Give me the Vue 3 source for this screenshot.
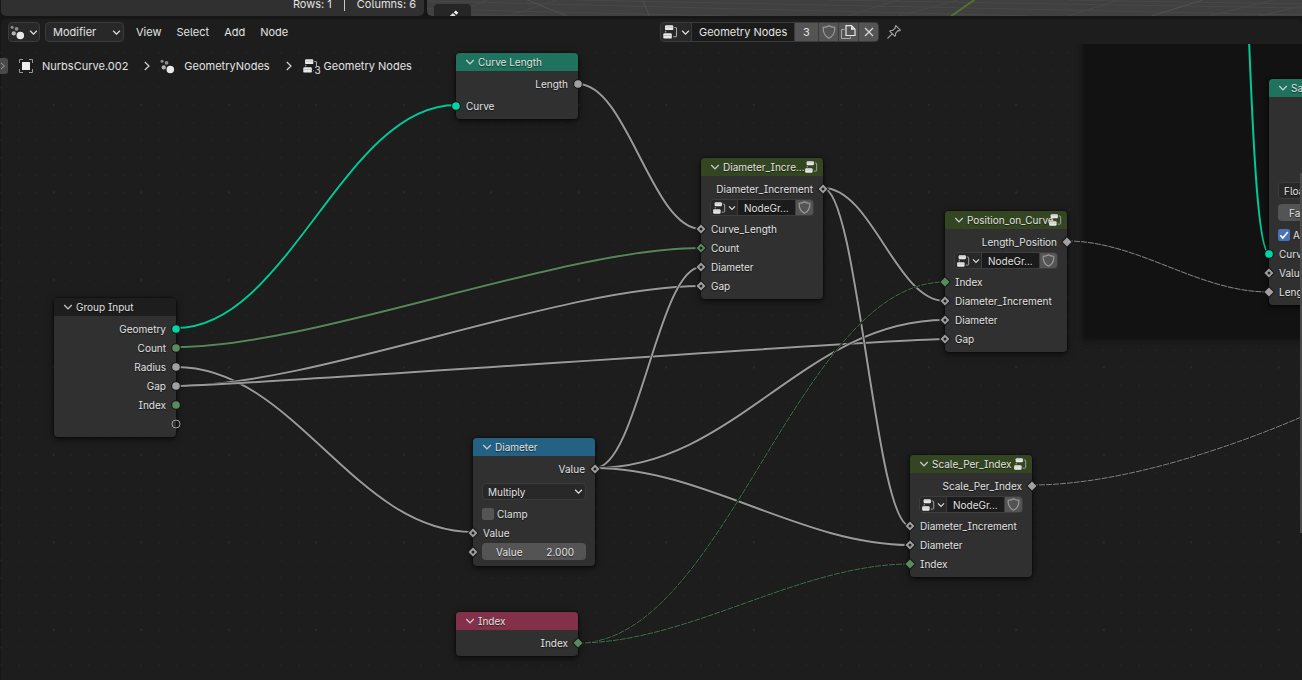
<script setup>
const P = (a, b, c, d) => {
  const w = Math.abs(c - a)
  const slope = Math.abs(d - b) / w
  const dx = 0.4 * w * Math.min(1, slope * 3.5)
  return `M${a} ${b}C${a + dx} ${b} ${c - dx} ${d} ${c} ${d}`
}
const wires = [
  { d: P(176, 328, 456, 105), kind: 'geo' },
  { d: P(176, 347, 701, 248), kind: 'int' },
  { d: P(176, 367, 473, 532), kind: 'flt' },
  { d: P(176, 386, 701, 286), kind: 'flt' },
  { d: P(176, 386, 945, 339), kind: 'flt' },
  { d: P(578, 84, 701, 229), kind: 'flt' },
  { d: P(595, 468, 701, 267), kind: 'flt' },
  { d: P(595, 468, 945, 320), kind: 'flt' },
  { d: P(595, 468, 910, 545), kind: 'flt' },
  { d: P(823, 188, 945, 301), kind: 'flt' },
  { d: P(823, 188, 910, 526), kind: 'flt' },
  { d: P(578, 643, 945, 282), kind: 'int', thin: true },
  { d: P(578, 643, 910, 564), kind: 'int', thin: true },
  { d: P(1067, 241, 1269, 292), kind: 'flt', thin: true },
  { d: 'M1032 485C1120 485 1230 448 1306 415', kind: 'flt', thin: true },
  { d: 'M1249 40C1252 110 1257 253 1269 253', kind: 'geo' },
]
const out = (text, kind = 'flt', shape = 'circle') => ({ t: 'row', side: 'out', text, kind, shape })
const inp = (text, kind = 'flt', shape = 'hollow') => ({ t: 'row', side: 'in', text, kind, shape })
const group = { t: 'group' }
const nodes = [
  { id: 'gi', title: 'Group Input', x: 54, y: 298, tone: 'dark', rows: [
    out('Geometry', 'geo'), out('Count', 'int'), out('Radius'), out('Gap'), out('Index', 'int'), out('', 'none', 'ring')] },
  { id: 'cl', title: 'Curve Length', x: 456, y: 53, tone: 'teal', rows: [out('Length'), { t: 'gap' }, inp('Curve', 'geo', 'circle')] },
  { id: 'di', title: 'Diameter_Incre...', x: 701, y: 158, tone: 'olive', rows: [
    out('Diameter_Increment', 'flt', 'hollow'), group, inp('Curve_Length'), inp('Count', 'int'), inp('Diameter'), inp('Gap')] },
  { id: 'po', title: 'Position_on_Curve', x: 945, y: 211, tone: 'olive', rows: [
    out('Length_Position', 'flt', 'diamond'), group, inp('Index', 'int', 'diamond'), inp('Diameter_Increment'), inp('Diameter'), inp('Gap')] },
  { id: 'sc', title: 'Scale_Per_Index', x: 910, y: 455, tone: 'olive', rows: [
    out('Scale_Per_Index', 'flt', 'diamond'), group, inp('Diameter_Increment'), inp('Diameter'), inp('Index', 'int', 'diamond')] },
  { id: 'dm', title: 'Diameter', x: 473, y: 438, tone: 'blue', rows: [
    out('Value', 'flt', 'hollow'), { t: 'select', text: 'Multiply', label: 'Operation' }, { t: 'check', text: 'Clamp', on: false },
    inp('Value'), { t: 'number', text: 'Value', value: '2.000' }] },
  { id: 'ix', title: 'Index', x: 456, y: 612, tone: 'red', rows: [out('Index', 'int', 'diamond')] },
  { id: 'sa', title: 'Sample Curve', x: 1269, y: 79, tone: 'teal', rows: [
    { t: 'space' }, { t: 'select', text: 'Float', label: 'Data type' }, { t: 'tab', text: 'Factor' }, { t: 'check', text: 'All Curves', on: true },
    inp('Curve', 'geo', 'circle'), inp('Value'), inp('Length', 'flt', 'diamond')] },
]
</script>

<template>
  <div class="app">
    <svg class="defs" aria-hidden="true">
      <symbol id="i-tree" viewBox="0 0 16 16">
        <rect x="3" y="1.300" width="8.300" height="4.800" rx="1.200" fill="#e8e8e8" />
        <rect x="1.300" y="9.300" width="8.500" height="5.300" rx="1.200" fill="#e8e8e8" />
        <path d="M3.500 3.200h7.300M1.800 11.500h7.500" stroke="#b5b5b5" stroke-width=".700" />
        <path d="M3.700 6.800v1.700M12.300 3.500h1.200q1 0 1 1v7.200q0 1-1 1h-2.300" fill="none" stroke="#a6a6a6" stroke-width="1.100" />
      </symbol>
      <symbol id="i-geo" viewBox="0 0 16 16">
        <circle cx="11" cy="11.300" r="4" fill="#e8e8e8" />
        <circle cx="4" cy="9" r="2.300" fill="#b4b4b4" />
        <circle cx="7" cy="4" r="2" fill="#8e8e8e" />
        <circle cx="2.200" cy="2.500" r="1.600" fill="#8e8e8e" />
      </symbol>
      <symbol id="i-chev" viewBox="0 0 8 8"><path d="M1 2.400 4 5.500 7 2.400" fill="none" stroke="currentColor" stroke-width="1.100" /></symbol>
      <symbol id="i-shield" viewBox="0 0 14 14"><path d="M7 .8C5.500 2 3.500 2.400 1.200 2.400c-.2 4.600 1.400 8.600 5.800 10.800 4.400-2.200 6-6.200 5.800-10.800C10.500 2.400 8.500 2 7 .8z" fill="none" stroke="#9b9b9b" stroke-width="1.200" /></symbol>
    </svg>

    <div class="upper">
      <div class="sheet"><span>Rows: 1</span><i></i><span>Columns: 6</span></div>
      <div class="viewport">
        <svg class="floor" viewBox="0 0 873 16" preserveAspectRatio="none" aria-hidden="true">
          <g stroke="#484848" fill="none">
            <path d="M0 9 300 16M0 1 600 16M150 0 873 15M400 0 873 8M0 14 120 16M640 0 873 4" />
            <path d="M20 16 60 0M80 16 130 0M420 16 470 0M470 16 530 0M640 16 690 0M780 16 845 0M830 16 873 6" />
            <path d="M100 0 140 16M215 0 222 16M723 16 774 0" stroke="#505050" />
          </g>
          <path d="M523 16 546 0" stroke="#54702f" stroke-width="2" />
        </svg>
        <button class="tool" aria-label="Annotate">
          <svg width="16" height="10" viewBox="0 0 16 10"><path d="M2 9.500 8 4l2.500 2.500L7 10H2z" fill="#e0e0e0" /><path d="m8.800 3.300 2-1.800 2.500 2.300-2 1.900z" fill="#f2f2f2" /></svg>
        </button>
      </div>
    </div>

    <section class="editor">
      <header class="bar">
        <button class="type" aria-label="Editor type"><svg width="15" height="15"><use href="#i-geo" /></svg><svg width="9" height="9"><use href="#i-chev" /></svg></button>
        <label class="drop mode"><select aria-label="Node tree type"><option>Modifier</option></select><svg width="9" height="9"><use href="#i-chev" /></svg></label>
        <nav><button>View</button><button>Select</button><button>Add</button><button>Node</button></nav>
        <div class="datablock">
          <button class="pick" aria-label="Browse node tree"><svg width="16" height="16"><use href="#i-tree" /></svg><svg width="9" height="9"><use href="#i-chev" /></svg></button>
          <input class="name" value="Geometry Nodes" aria-label="Node tree name" />
          <button class="users">3</button>
          <button class="sq" aria-label="Fake user"><svg width="14" height="14"><use href="#i-shield" /></svg></button>
          <button class="sq" aria-label="Duplicate">
            <svg width="15" height="15" viewBox="0 0 15 15" fill="none"><path d="M3.500 4.500h-3v9h9v-2" stroke="#a8a8a8" /><path d="M5 .7h5.500L14 4.200v6.300H5z" stroke="#e6e6e6" stroke-width="1.200" /><path d="M10 .7v4h4z" fill="#e6e6e6" /></svg>
          </button>
          <button class="sq" aria-label="Unlink"><svg width="10" height="10" viewBox="0 0 10 10"><path d="m1 1 8 8M9 1 1 9" stroke="#d8d8d8" stroke-width="1.200" /></svg></button>
        </div>
        <button class="pin" aria-label="Pin">
          <svg width="14" height="14" viewBox="0 0 14 14" fill="none" stroke="#a0a0a0" stroke-width="1.100"><path d="M8.800.7 13.300 5.200 12 5.900 11 5.700 8.600 8.300 8.500 10.500 7.800 11.200 2.800 6.200 3.500 5.500 5.700 5.400 8.300 3 8.100 2zM5.300 8.700.5 13.500" /></svg>
        </button>
      </header>

      <div class="canvas">
        <div class="frame"></div>
        <svg class="wires" aria-hidden="true">
          <g v-for="(w, i) in wires" :key="i" :class="['wire', w.kind, { thin: w.thin }]">
            <path class="edge" :d="w.d" /><path class="core" :d="w.d" />
          </g>
        </svg>

        <article v-for="n in nodes" :key="n.id" class="node" :class="n.tone" :style="{ left: n.x + 'px', top: n.y + 'px' }">
          <h2><svg class="fold" width="10" height="10"><use href="#i-chev" /></svg><span>{{ n.title }}</span><svg v-if="n.tone === 'olive'" class="gicon" width="14" height="14"><use href="#i-tree" /></svg></h2>
          <div class="body">
            <template v-for="(r, i) in n.rows" :key="i">
              <div v-if="r.t === 'row'" class="row" :class="r.side">
                <span>{{ r.text }}</span>
                <svg class="sock" :class="r.kind" width="12" height="12" viewBox="-6 -6 12 12">
                  <circle v-if="r.shape === 'circle'" r="3.800" /><circle v-else-if="r.shape === 'ring'" class="ring" r="4" />
                  <path v-else d="M0-4.500 4.500 0 0 4.500-4.500 0z" /><circle v-if="r.shape === 'hollow'" class="hole" r="1.500" />
                </svg>
              </div>
              <div v-else-if="r.t === 'gap'" class="gap"></div>
              <div v-else-if="r.t === 'space'" class="space"></div>
              <div v-else-if="r.t === 'group'" class="group">
                <button class="gpick" aria-label="Browse group"><svg width="14" height="14"><use href="#i-tree" /></svg><svg width="8" height="8"><use href="#i-chev" /></svg></button>
                <input value="NodeGr..." aria-label="Group name" />
                <button class="gshield" aria-label="Fake user"><svg width="13" height="13"><use href="#i-shield" /></svg></button>
              </div>
              <label v-else-if="r.t === 'select'" class="drop small"><select :aria-label="r.label"><option>{{ r.text }}</option></select><svg width="9" height="9"><use href="#i-chev" /></svg></label>
              <button v-else-if="r.t === 'tab'" class="tab">{{ r.text }}</button>
              <label v-else-if="r.t === 'check'" class="check">
                <input type="checkbox" :checked="r.on" />
                <svg v-if="r.on" class="tick" width="12" height="12" viewBox="0 0 12 12"><path d="M2.300 6.300 4.800 9 9.800 3" fill="none" stroke="#fff" stroke-width="1.600" /></svg>
                <span>{{ r.text }}</span>
              </label>
              <div v-else class="row in last">
                <label class="number"><span>{{ r.text }}</span><input :value="r.value" /></label>
                <svg class="sock" width="12" height="12" viewBox="-6 -6 12 12"><path d="M0-4.500 4.500 0 0 4.500-4.500 0z" /><circle class="hole" r="1.500" /></svg>
              </div>
            </template>
          </div>
        </article>

        <div class="crumbs">
          <button class="expand" aria-label="Show toolbar">
            <svg width="6" height="8" viewBox="0 0 6 8"><path d="M1 1 4.500 4 1 7" fill="none" stroke="#a0a0a0" /></svg>
          </button>
          <svg class="obj" width="14" height="14" viewBox="0 0 14 14"><path d="M.5 4V.5H4M10 .5h3.500V4M13.500 10v3.500H10M4 13.500H.5V10" fill="none" stroke="#999" /><rect x="3" y="3" width="8" height="8" rx=".5" fill="#eee" /></svg>
          <a href="#">NurbsCurve.002</a>
          <svg class="sep" width="6" height="10" viewBox="0 0 6 10"><path d="m.8 1 4.200 4L.8 9" fill="none" stroke="#d4d4d4" stroke-width="1.200" /></svg>
          <svg width="15" height="15"><use href="#i-geo" /></svg>
          <a href="#">GeometryNodes</a>
          <svg class="sep" width="6" height="10" viewBox="0 0 6 10"><path d="m.8 1 4.200 4L.8 9" fill="none" stroke="#d4d4d4" stroke-width="1.200" /></svg>
          <span class="tree"><svg width="16" height="16"><use href="#i-tree" /></svg><small>3</small></span>
          <a class="end" href="#">Geometry Nodes</a>
        </div>
        <div class="scroll"></div>
      </div>
    </section>
  </div>
</template>

<style>
html, body, #app { height: 100%; }
body { margin: 0; background: #161616; overflow: hidden; }
</style>

<style scoped>
.app { height: 100%; display: flex; flex-direction: column; gap: 3px; background: #161616; color: #e2e2e2; font: 11px/16px Inter, "Liberation Sans", sans-serif; font-feature-settings: "cv05", "cv08"; overflow: hidden; }
* { box-sizing: border-box; }
button, input, select { font: inherit; font-feature-settings: inherit; color: inherit; margin: 0; padding: 0; border: 0; background: none; outline: 0; min-width: 0; text-shadow: inherit; }
a { color: inherit; text-decoration: none; }
svg { flex: none; display: block; }
.defs { position: absolute; width: 0; height: 0; }
.upper { display: flex; gap: 3px; height: 16px; flex: none; }
.sheet { width: 423px; margin-left: 1px; background: #303030; border-radius: 0 0 5px 5px; display: flex; justify-content: flex-end; align-items: flex-start; padding-right: 8px; gap: 12px; line-height: 8px; }
.sheet i { width: 1px; height: 11px; background: #c8c8c8; }
.viewport { flex: 1; background: #404040; border-radius: 0 0 0 5px; position: relative; overflow: hidden; }
.floor { width: 100%; height: 16px; }
.tool { position: absolute; left: 7px; top: 4px; width: 37px; height: 18px; border-radius: 4px; background: #262626; display: flex; justify-content: center; padding-top: 5px; }
.editor { flex: 1; min-height: 0; margin-left: 1px; background: #1d1d1d; border-radius: 5px 5px 0 0; display: flex; flex-direction: column; }
.bar { height: 26px; flex: none; display: flex; align-items: center; padding-left: 7px; position: relative; z-index: 1; }
.type, .drop { border: 1px solid #3b3b3b; border-radius: 4px; background: #282828; display: flex; align-items: center; height: 20px; }
.type { width: 32px; justify-content: center; gap: 4px; }
.drop { position: relative; }
.drop select { appearance: none; width: 100%; height: 100%; padding-left: 7px; }
.drop svg { position: absolute; right: 2px; pointer-events: none; }
.mode { width: 79px; margin-left: 5px; }
nav { display: flex; gap: 15px; margin-left: 12px; }
.datablock { position: absolute; left: 659px; display: flex; height: 20px; border: 1px solid #3b3b3b; border-radius: 4px; overflow: hidden; gap: 1px; background: #3b3b3b; }
.datablock > * { height: 18px; display: flex; align-items: center; justify-content: center; background: #545454; }
.datablock .pick { width: 30px; background: #282828; gap: 3px; }
.datablock .name { width: 102px; padding-left: 7px; background: #1b1b1b; }
.datablock .users { width: 23px; }
.datablock .sq { width: 19px; }
.pin { position: absolute; left: 886px; }
.canvas { flex: 1; min-height: 0; position: relative; overflow: hidden; margin: -45px 0 0 -1px; clip-path: inset(44px 0 0 0);
  background-image: radial-gradient(circle, #2a2a2a 1px, transparent 1px), radial-gradient(circle, #222 1px, transparent 1px);
  background-size: 87.5px 87.5px, 17.5px 17.5px; background-position: 10px 61px, 10px 9px; }
.frame { position: absolute; left: 1084px; right: -20px; top: -10px; height: 349px; background: #121212; box-shadow: 0 0 7px #0c0c0c; }
.wires { position: absolute; inset: 0; width: 100%; height: 100%; }
.wire path { fill: none; }
.edge { stroke: #161616; stroke-width: 3px; }
.core { stroke-width: 2px; stroke: #9a9a9a; }
.geo .core { stroke: #00c896; }
.int .core { stroke: #55865a; }
.thin .edge { stroke-width: 2px; }
.thin .core { stroke-width: 1px; stroke-dasharray: 6 1; stroke: #858585; }
.thin.int .core { stroke: #47724b; }
.node { position: absolute; width: 122px; background: #303030; border-radius: 4px; box-shadow: 0 2px 7px #000a, 0 0 2px #000c; font-size: 10px; text-shadow: 0 1px 1px #0009; }
.node h2 { margin: 0; height: 18px; border-radius: 4px 4px 0 0; display: flex; align-items: center; gap: 3px; padding: 0 6px 0 9px; font-weight: 400; font-size: 10px; white-space: nowrap; position: relative; }
.fold { opacity: .85; }
.gicon { position: absolute; right: 5px; }
.dark h2 { background: #1d1d1d; } .teal h2 { background: #1f735e; } .olive h2 { background: #344621; } .blue h2 { background: #246283; } .red h2 { background: #83314a; }
.body { padding: 3px 0 4px; display: flex; flex-direction: column; }
.row { height: 19px; display: flex; align-items: center; padding: 0 10px; position: relative; }
.out { justify-content: flex-end; }
.last { margin-bottom: 1px; }
.gap { height: 3px; }
.space { height: 77px; }
.sock { position: absolute; fill: #a1a1a1; overflow: visible; }
.sock > * { stroke: #161616; stroke-width: 2px; paint-order: stroke; }
.in .sock { left: -6px; } .out .sock { right: -6px; }
.sock.geo { fill: #00d6a3; } .sock.int { fill: #598c5c; }
.sock .ring { fill: none; stroke: #a1a1a1; stroke-width: 1px; } .sock .hole { fill: #222; stroke: none; }
.group { height: 17px; margin: 1px 9px 3px; display: flex; gap: 1px; border-radius: 4px; border: 1px solid #3d3d3d; background: #3d3d3d; overflow: hidden; }
.group > * { display: flex; align-items: center; justify-content: center; }
.gpick { width: 26px; background: #282828; gap: 2px; }
.group input { flex: 1; width: 0; padding-left: 6px; background: #1b1b1b; }
.group .gshield { width: 17px; background: #545454; }
.small { height: 17px; margin: 5px 9px 4px; }
.small select { padding-left: 5px; }
.tab { height: 17px; margin: 1px 9px 4px; padding-left: 11px; text-align: left; border-radius: 4px; background: #545454; }
.check { height: 19px; display: flex; align-items: center; gap: 3px; padding-left: 9px; white-space: nowrap; position: relative; }
.check input { appearance: none; width: 12px; height: 12px; border-radius: 2px; background: #545454; }
.check input:checked { background: #4772b3; }
.tick { position: absolute; left: 9px; pointer-events: none; }
.number { flex: 1; margin: 0 -1px; height: 17px; border-radius: 4px; background: #545454; display: flex; align-items: center; justify-content: space-between; padding: 0 12px 0 14px; }
.number input { width: 40px; text-align: right; }
.crumbs { position: absolute; left: 0; top: 58px; height: 16px; display: flex; align-items: center; }
.expand { width: 8px; height: 16px; background: #4a4a4a; border-radius: 0 3px 3px 0; margin-right: 11px; display: flex; align-items: center; }
.crumbs a { margin-left: 9px; }
.crumbs .end { margin-left: 4px; }
.sep { margin: 0 10px 0 16px; }
.tree { display: flex; width: 18px; position: relative; }
.tree small { position: absolute; left: 12px; top: 8px; padding-left: 1px; background: #1d1d1d; font-size: 10px; line-height: 9px; }
.scroll { position: absolute; right: 0; top: 173px; width: 2px; height: 360px; background: #4a4a4a; }
</style>
